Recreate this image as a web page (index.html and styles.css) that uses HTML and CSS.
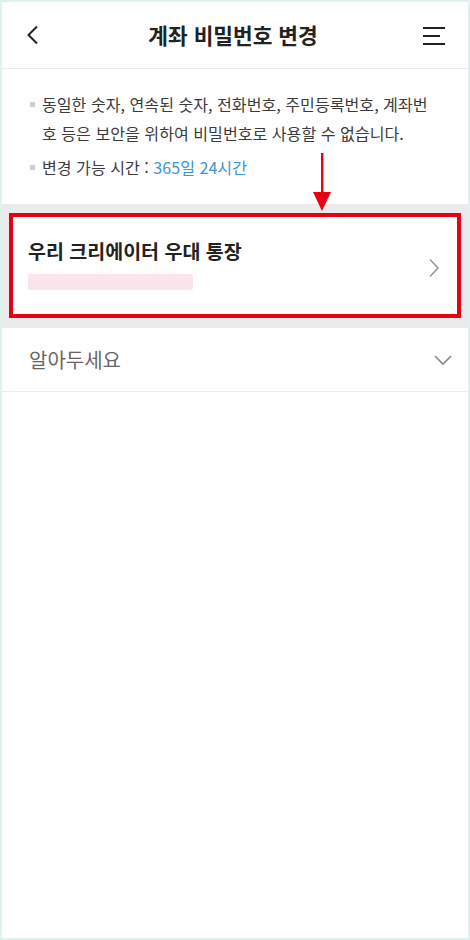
FILE: index.html
```html
<!DOCTYPE html>
<html lang="ko">
<head>
    <meta charset="UTF-8">
    <meta name="viewport" content="width=device-width, initial-scale=1.0">
    <title>계좌 비밀번호 변경</title>
    <link rel="stylesheet" href="styles.css">
</head>
<body>
    <div class="screen">
        <header class="topbar">
            <button class="icon-btn" aria-label="뒤로">
                <svg width="14" height="20" viewBox="0 0 14 20"><path d="M11 1.5 L2.5 10 L11 18.5" fill="none" stroke="#222" stroke-width="2"/></svg>
            </button>
            <h1 class="title">계좌 비밀번호 변경</h1>
            <button class="icon-btn" aria-label="메뉴">
                <svg width="24" height="20" viewBox="0 0 24 20"><path d="M1 3h22M1 11h17M1 19h22" stroke="#222" stroke-width="2.2"/></svg>
            </button>
        </header>

        <!-- 안내 문구 -->
        <ul class="notice">
            <li>동일한 숫자, 연속된 숫자, 전화번호, 주민등록번호, 계좌번호 등은 보안을 위하여 비밀번호로 사용할 수 없습니다.</li>
            <li>변경 가능 시간 : <span class="blue">365일 24시간</span></li>
        </ul>

        <section class="account-area">
            <a class="account-card" href="#">
                <div class="account-info">
                    <strong class="account-name">우리 크리에이터 우대 통장</strong>
                    <span class="account-no"></span>
                </div>
                <svg class="chev" width="12" height="20" viewBox="0 0 12 20"><path d="M2 1.5 L10 10 L2 18.5" fill="none" stroke="#999" stroke-width="1.6"/></svg>
            </a>
        </section>

        <div class="fold-row">
            <span>알아두세요</span>
            <svg width="18" height="12" viewBox="0 0 18 12"><path d="M1 2 L9 10 L17 2" fill="none" stroke="#888" stroke-width="1.6"/></svg>
        </div>

        <!-- 화살표 표시 -->
        <svg class="pointer" width="20" height="60" viewBox="0 0 20 60">
            <rect x="9" y="0" width="2.4" height="44" fill="#e60012"/>
            <path d="M1 39 L19 39 L10 58 Z" fill="#e60012"/>
        </svg>
    </div>
</body>
</html>
```

FILE: styles.css
```css
* {
    box-sizing: border-box;
}
body {
    margin: 0;
    background: #fff;
    font-family: "Noto Sans CJK KR", "Noto Sans", sans-serif;
    color: #222;
}
.screen {
    position: relative;
    width: 470px;
    height: 940px;
    border: 2px solid #dbf4ee;
    background: #fff;
    overflow: hidden;
}
.topbar {
    height: 67px;
    display: flex;
    align-items: center;
    justify-content: space-between;
    padding: 0 22px 0 24px;
    border-bottom: 1px solid #ebebeb;
}
.icon-btn {
    border: 0;
    background: none;
    padding: 0;
    display: flex;
    align-items: center;
}
.title {
    margin: 0;
    font-size: 21.4px;
    font-weight: 700;
    color: #222;
    line-height: 1;
    padding-left: 4px;
}
.notice {
    list-style: none;
    margin: 0;
    padding: 21px 26px 22px 40px;
    font-size: 16.1px;
    color: #3c3c3c;
    line-height: 29px;
    word-break: break-all;
}
.notice li {
    position: relative;
}
.notice li + li {
    margin-top: 5px;
}
.notice li::before {
    content: "";
    position: absolute;
    left: -12px;
    top: 12px;
    width: 5px;
    height: 5px;
    background: #cfcfcf;
}
.blue {
    color: #3d94d6;
}
.account-area {
    background: #ebebeb;
    padding: 9px 7px 10px 7px;
}
.account-card {
    display: flex;
    align-items: center;
    justify-content: space-between;
    background: #fff;
    border: 4.5px solid #e60012;
    padding: 21px 17px 24px 15px;
    text-decoration: none;
}
.account-info {
    display: flex;
    flex-direction: column;
}
.account-name {
    font-size: 19.5px;
    font-weight: 700;
    color: #222;
    line-height: 26px;
}
.account-no {
    display: block;
    width: 165px;
    height: 16px;
    margin-top: 10px;
    background: #fce4ec;
    border-radius: 2px;
}
.chev {
    margin-top: 8px;
}
.fold-row {
    height: 64px;
    display: flex;
    align-items: center;
    justify-content: space-between;
    padding: 0 16px 0 27px;
    border-bottom: 1px solid #ececec;
    font-size: 20px;
    color: #666;
}
.pointer {
    position: absolute;
    left: 310px;
    top: 151px;
}
```
